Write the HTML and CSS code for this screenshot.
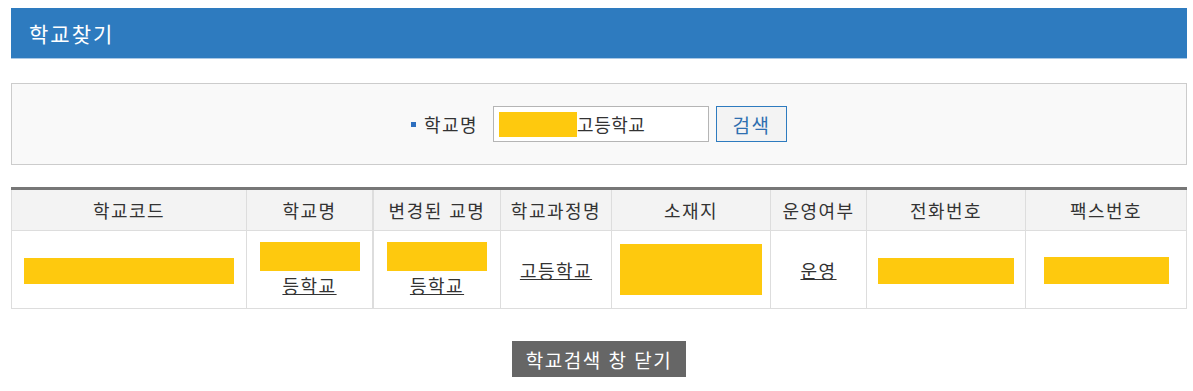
FILE: index.html
```html
<!DOCTYPE html>
<html lang="ko">
<head>
    <meta charset="UTF-8">
    <title>학교찾기</title>
    <link rel="stylesheet" href="styles.css">
</head>
<body>
    <div class="wrap">
        <h1 class="title">학교찾기</h1>

        <div class="search-box">
            <span class="bullet"></span>
            <label class="search-label">학교명</label>
            <div class="search-input"><span class="mask mask-input"></span>고등학교</div>
            <button type="button" class="search-btn">검색</button>
        </div>

        <table class="result">
            <thead>
                <tr>
                    <th class="c1">학교코드</th>
                    <th class="c2">학교명</th>
                    <th class="c3">변경된 교명</th>
                    <th class="c4">학교과정명</th>
                    <th class="c5">소재지</th>
                    <th class="c6">운영여부</th>
                    <th class="c7">전화번호</th>
                    <th class="c8">팩스번호</th>
                </tr>
            </thead>
            <tbody>
                <tr>
                    <td><span class="mask mask-code"></span></td>
                    <td><span class="mask mask-name"></span><a href="#">등학교</a></td>
                    <td><span class="mask mask-name"></span><a href="#">등학교</a></td>
                    <td><a href="#">고등학교</a></td>
                    <td><span class="mask mask-addr"></span></td>
                    <td><a href="#">운영</a></td>
                    <td><span class="mask mask-tel"></span></td>
                    <td><span class="mask mask-fax"></span></td>
                </tr>
            </tbody>
        </table>

        <div class="bottom">
            <button type="button" class="close-btn">학교검색 창 닫기</button>
        </div>
    </div>
</body>
</html>
```

FILE: styles.css
```css
body {
    margin: 0;
    padding: 8px 6px 0 11px;
    font-family: "Noto Sans CJK KR", "Noto Sans", sans-serif;
    color: #333;
    background: #fff;
}

.wrap {
    width: 1176px;
}

.title {
    margin: 0;
    height: 50px;
    line-height: 50px;
    padding-left: 18px;
    background-color: #2e7bbf;
    border-bottom: 1px solid #a9c8e6;
    color: #fff;
    font-size: 21px;
    letter-spacing: 2px;
    font-weight: normal;
}

.search-box {
    margin-top: 24px;
    height: 80px;
    border: 1px solid #ccc;
    background-color: #f9f9f9;
    display: flex;
    align-items: center;
    justify-content: center;
}

.bullet {
    width: 5px;
    height: 5px;
    background-color: #2e6fbf;
    margin-right: 8px;
}

.search-label {
    font-size: 18px;
    letter-spacing: 1.5px;
    color: #333;
    margin-right: 15px;
}

.search-input {
    box-sizing: border-box;
    width: 216px;
    height: 36px;
    border: 1px solid #b5b5b5;
    background: #fff;
    display: flex;
    align-items: center;
    padding-left: 5px;
    font-size: 18px;
    letter-spacing: 0.5px;
    color: #333;
}

.search-btn {
    box-sizing: border-box;
    margin-left: 7px;
    width: 71px;
    height: 36px;
    border: 1px solid #2e7bbf;
    background: #f3f3f3;
    color: #2e6fb0;
    font-family: inherit;
    font-size: 19px;
    letter-spacing: 1.5px;
    padding: 0;
}

.mask {
    display: inline-block;
    background-color: #fec90e;
    vertical-align: middle;
}

.mask-input {
    width: 78px;
    height: 25px;
}

.mask-code {
    width: 210px;
    height: 26px;
}

.mask-name {
    display: block;
    width: 100px;
    height: 29px;
    margin: 0 auto 1px;
}

.mask-addr {
    width: 142px;
    height: 51px;
}

.mask-tel {
    width: 136px;
    height: 26px;
}

.mask-fax {
    width: 125px;
    height: 27px;
}

.result {
    margin-top: 22px;
    width: 1176px;
    border-collapse: collapse;
    border-top: 3px solid #777;
    table-layout: fixed;
}

.result th,
.result td {
    border: 1px solid #ddd;
    text-align: center;
    font-size: 18px;
    letter-spacing: 1.5px;
    color: #333;
    padding: 0;
}

.result th {
    height: 40px;
    background-color: #f3f3f3;
    font-weight: normal;
}

.result td {
    height: 77px;
}

.result .c1 { width: 234px; }
.result .c2 { width: 125px; }
.result .c3 { width: 126px; border-left: 2px solid #ddd; }
.result .c4 { width: 110px; }
.result .c5 { width: 158px; }
.result .c6 { width: 95px; }
.result .c7 { width: 158px; }
.result .c8 { width: 160px; }

.result td:nth-child(3) {
    border-left: 2px solid #ddd;
}

.result a {
    color: #333;
    text-decoration: underline;
}

.bottom {
    margin-top: 32px;
    text-align: center;
}

.close-btn {
    height: 36px;
    padding: 0 14px;
    border: none;
    background-color: #666;
    color: #fff;
    font-family: inherit;
    font-size: 19px;
    letter-spacing: 1.5px;
}
```
